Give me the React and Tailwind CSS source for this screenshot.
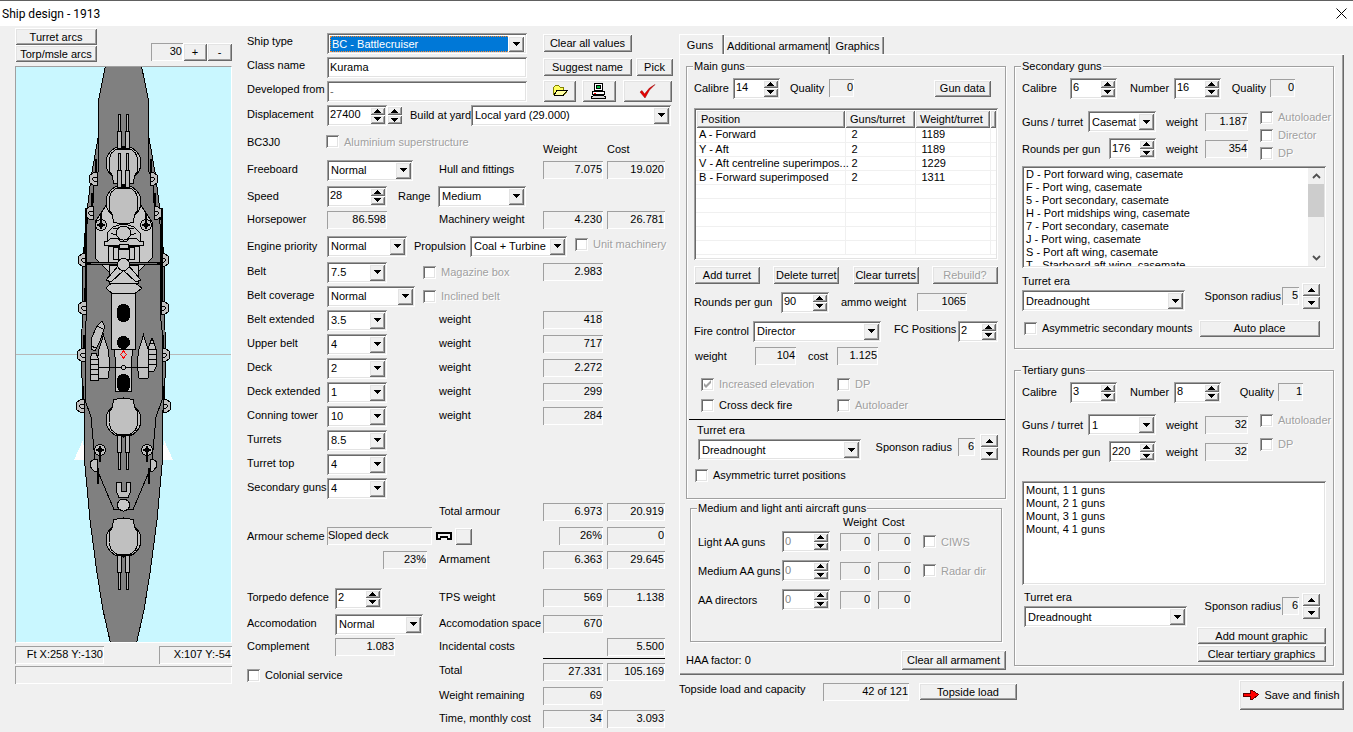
import React from "react";

const FIELD =
  "bg-white shadow-[inset_1px_1px_0_#a0a0a0,inset_-1px_-1px_0_#ffffff,inset_2px_2px_0_#696969,inset_-2px_-2px_0_#e3e3e3]";
const RAISED =
  "bg-[#f0f0f0] shadow-[inset_1px_1px_0_#ffffff,inset_-1px_-1px_0_#696969,inset_2px_2px_0_#e3e3e3,inset_-2px_-2px_0_#a0a0a0]";
const THIN = "shadow-[inset_1px_1px_0_#a0a0a0,inset_-1px_-1px_0_#ffffff]";
const DIM = "text-[#a0a0a0] [text-shadow:1px_1px_0_#ffffff]";
const GROUP =
  "min-w-0 border border-[#a0a0a0] shadow-[1px_1px_0_#ffffff,inset_1px_1px_0_#ffffff]";

function Value({ children, className = "w-[60px]", align = "text-right" }) {
  return (
    <output className={`block h-[18px] shrink-0 leading-[17px] px-px whitespace-nowrap ${THIN} ${align} ${className}`}>
      {children}
    </output>
  );
}

function Button({ children, className = "", disabled, label }) {
  return (
    <button
      type="button"
      disabled={disabled}
      aria-label={label}
      className={`flex shrink-0 items-center justify-center whitespace-nowrap ${RAISED} ${disabled ? DIM : ""} ${className}`}
    >
      {children}
    </button>
  );
}

function Tri({ up }) {
  return (
    <svg width="7" height="4" viewBox="0 0 7 4" shapeRendering="crispEdges" aria-hidden="true">
      <path d={up ? "M3 0h1v1h1v1h1v1h1v1H0V3h1V2h1V1h1z" : "M0 0h7v1H6v1H5v1H4v1H3V3H2V2H1V1H0z"} />
    </svg>
  );
}

function Select({ id, label, value, className = "", active }) {
  return (
    <span className={`grid h-[21px] shrink-0 ${active ? "p-[3px]" : "p-[2px]"} ${FIELD} ${className}`}>
      <select
        id={id}
        aria-label={label}
        defaultValue={value}
        className={`col-start-1 row-start-1 h-full w-full min-w-0 appearance-none overflow-hidden pr-4 outline-none ${
          active ? "bg-[#0078d7] pl-px text-white border border-dotted border-[#ff8728]" : "bg-transparent pl-[2px]"
        }`}
      >
        <option>{value}</option>
      </select>
      <span
        className={`pointer-events-none col-start-1 row-start-1 flex w-4 items-center justify-center justify-self-end ${RAISED}`}
      >
        <Tri />
      </span>
    </span>
  );
}

function Arrows({ label, size = "w-[15px]" }) {
  return (
    <span className={`flex h-full shrink-0 flex-col ${size}`}>
      <button type="button" aria-label={`Increase ${label}`} className={`flex min-h-0 flex-1 items-center justify-center ${RAISED}`}>
        <Tri up />
      </button>
      <button type="button" aria-label={`Decrease ${label}`} className={`flex min-h-0 flex-1 items-center justify-center ${RAISED}`}>
        <Tri />
      </button>
    </span>
  );
}

function Spin({ id, label, value, className = "w-[47px]", dim }) {
  return (
    <span className={`flex h-[21px] shrink-0 p-[2px] ${FIELD} ${className}`}>
      <input
        id={id}
        aria-label={label}
        inputMode="numeric"
        defaultValue={value}
        className={`h-[15px] w-full min-w-0 bg-transparent pl-px outline-none ${dim ? "text-[#838383]" : ""}`}
      />
      <Arrows label={label} />
    </span>
  );
}

function Check({ children, disabled, checked, className = "", gap = "gap-[5px]" }) {
  return (
    <label className={`flex items-center whitespace-nowrap ${gap} ${disabled ? DIM : ""} ${className}`}>
      <span className="grid size-[13px] shrink-0">
        <input
          type="checkbox"
          defaultChecked={checked}
          disabled={disabled}
          className={`col-start-1 row-start-1 size-[13px] appearance-none ${FIELD} ${disabled ? "bg-[#f0f0f0]" : ""}`}
        />
        {checked && (
          <svg viewBox="0 0 13 13" className="pointer-events-none col-start-1 row-start-1 size-[13px]" aria-hidden="true">
            <path d="M3 5v3l2 2 5-5V2L5 7z" fill="#a0a0a0" />
          </svg>
        )}
      </span>
      {children}
    </label>
  );
}

function Row({ label, id, h = "h-6", w = "w-20", cell = "w-28", right, weight, cost, children, top = "" }) {
  return (
    <div className={`flex items-center ${h}`}>
      {label && (
        <label htmlFor={id} className={`shrink-0 whitespace-nowrap pb-[2px] ${w}`}>
          {label}
        </label>
      )}
      <div className={`flex shrink-0 items-center ${cell}`}>{children}</div>
      <span className="w-[104px] shrink-0 whitespace-nowrap pb-[2px]">{right}</span>
      <div className={`flex h-full w-[122px] items-center gap-1 ${top}`}>
        {weight ? <Value>{weight}</Value> : <span className="w-[60px]" />}
        {cost && <Value className="w-[58px]">{cost}</Value>}
      </div>
    </div>
  );
}

function Turret({ y, flip }) {
  return (
    <g transform={`translate(123.5 ${y})${flip ? " scale(1 -1)" : ""}`} stroke="#000" strokeWidth="1">
      <ellipse cx="0" cy="0" rx="17.5" ry="17" fill="#c0c0c0" />
      <path d="M-4 -16h8v3h-8z" fill="#000" />
      <path
        d="M-7 -14H7L12 -10L14.500 -3L14 8L11 13L10 20Q0 24 -10 20L-11 13L-14 8L-14.500 -3L-12 -10Z"
        fill="#c0c0c0"
      />
      <path d="M-5 -49h2v17h-2zM3 -49h2v17h-2zM-6 -32h4v17h-4zM2 -32h4v17h-4z" fill="#b8b8b8" />
    </g>
  );
}

function Casemate({ x, y, side }) {
  const s = side === "l" ? 1 : -1;
  return (
    <g transform={`translate(${x} ${y}) scale(${s} 1)`} stroke="#000" fill="#c0c0c0">
      <path d="M4 -6.500H1L-3 -4L-4 0L-3 4L1 6.500H4Z" />
      <path d="M4 -2H1L-1 0L1 2H4" fill="none" />
      <path d="M3 -20V-6" strokeWidth="1.500" />
    </g>
  );
}

function DeckGun({ x, y, down }) {
  return (
    <g transform={`translate(${x} ${y})`} stroke="#000" fill="#c0c0c0">
      <circle r="5.500" />
      <circle r="2" fill="#707070" />
      <path d={down ? "M0 -4V12M-4 0H4" : "M0 4V-12M-4 0H4"} strokeWidth="1.500" />
    </g>
  );
}

function Ship() {
  return (
    <svg viewBox="16 67 215 575" className="block w-full" shapeRendering="crispEdges" role="img" aria-label="Ship plan">
      <rect x="16" y="67" width="215" height="575" fill="#c9f7ff" />
      <path d="M16 354.500H231" stroke="#b8b8b8" />
      <path d="M83 440L74 460H85ZM164 440L173 460H162Z" fill="#fff" />
      <path
        d="M105.500 66L99 98L98 138L91 178L86 220L83 260L82 330L81.500 370L84 410L84.500 460L90 520L97 573L103 610L110.500 643H136.500L144 610L150 573L157 520L162.500 460L163 410L165.500 370L165 330L164 260L161 220L156 178L149 138L148 98L141.500 66Z"
        fill="#808080"
        stroke="#000"
      />
      <path
        d="M98.500 98V171L93.500 182V202L88 213L86.500 230V316L85 330V400L91 417L95.500 466L114 509.500H133L151.500 466L156 417L162 400V330L160.500 316V230L159 213L153.500 202V182L148.500 171V98"
        fill="none"
        stroke="#000"
      />
      {[[93, 179], [89, 213], [82, 260], [82, 308], [81, 355], [80, 406]].map(([x, y]) => (
        <g key={y}>
          <Casemate x={x} y={y} side="l" />
          <Casemate x={247 - x} y={y} side="r" />
        </g>
      ))}
      <path d="M109 201L95 222V258L109 272H138L152 258V222L138 201Z" fill="#c8c8c8" stroke="#000" />
      <path d="M85.500 208V300M161.500 208V300" stroke="#000" strokeWidth="2" />
      <DeckGun x={101} y={225} />
      <DeckGun x={146} y={225} />
      <Turret y={163} />
      <Turret y={202} />
      <g fill="#c8c8c8" stroke="#000">
        <path d="M107 243V233L113 227Q123.500 222 134 227L140 233V243Z" />
        <path d="M111 233L118 236M136 233L129 236M113 228H134" />
        <circle cx="123.500" cy="233" r="7" />
        <path d="M104 241H108L111 238H118L120 241H127L129 238H136L139 241H143V245H104Z" />
        <path d="M108 246H139V262H108Z" />
        <path d="M113 247H118V259H113ZM129 247H134V259H129ZM119 244H128V248H119ZM118 249H129V259H118Z" />
        <path d="M109 265H138V283H109Z" />
        <path d="M106 280L119 265L124 270L111 282ZM141 280L128 265L123 270L136 282Z" />
        <path d="M86 263.500H161" strokeWidth="2.500" />
        <path d="M91 263.500H157" stroke="#c8c8c8" strokeWidth="0.600" />
        <circle cx="123.500" cy="264.500" r="6" />
        <path d="M111 283.500H136L142 288L135 293.500H112L106 288Z" />
        <path d="M111.500 293.500H135.500V349.500H111.500Z" />
        <path d="M114 349.500H133L131.500 360V391.500H115.500V360Z" />
      </g>
      <rect x="117" y="304" width="13" height="18" rx="6" />
      <circle cx="123.500" cy="342.500" r="6.500" />
      <rect x="117" y="374" width="13" height="18" rx="6" />
      <path d="M123.500 351L126.500 354.500L123.500 358L120.500 354.500Z" fill="none" stroke="#f00" />
      <g fill="#c0c0c0" stroke="#000">
        <path d="M103.500 335L99 349L97 364L98 378H108L110 364L108 349Z" />
        <path d="M143.500 335L148 349L150 364L148 378H139L137 364L139 349Z" />
        <path d="M102 321L104 325V329L100 341L95 351L91 349L91 339L97 326Z" />
        <path d="M97 326L103 329M91 346L96 348" />
        <path d="M92 353H96L98.500 359V380H90V359Z" />
        <path d="M90 359H98M90 364H98M90 369H98M90 374H98" />
        <path d="M150 343L152 338L154 343L156 349V367L154 371H149L148 367V349Z" />
        <path d="M148 349H156M148 354H156M148 359H156M148 364H156M149 343H155" />
        <path d="M98 367.500H149" />
        <circle cx="123.500" cy="367.500" r="2" />
      </g>
      <Turret y={420} flip />
      <Turret y={540} flip />
      <DeckGun x={100} y={450} down />
      <DeckGun x={147} y={450} down />
      <g fill="#c0c0c0" stroke="#000">
        <path d="M97 459H94L90.500 462V467L94 471H97ZM150 459H153L156.500 462V467L153 471H150Z" />
        <path d="M98 468V484M149 468V484" strokeWidth="1.500" />
        <path d="M116.500 482.500H121V491H126V482.500H130.500V492L128 497.500H119L116.500 492Z" />
        <circle cx="123.500" cy="505" r="6" fill="#c8c8c8" />
      </g>
    </svg>
  );
}

function LeftColumn() {
  return (
    <div className="w-[217px] shrink-0 pt-[2px]">
      <div className="flex items-end justify-between">
        <div className="flex w-[82px] flex-col">
          <Button className="h-[17px]">Turret arcs</Button>
          <Button className="h-[17px]">Torp/msle arcs</Button>
        </div>
        <div className="flex items-center pb-px">
          <Value className="w-8">30</Value>
          <Button className="h-[18px] w-6" label="Zoom in">+</Button>
          <Button className="h-[18px] w-[25px]" label="Zoom out">-</Button>
        </div>
      </div>
      <div className="mt-1 border border-t-[#a0a0a0] border-r-white border-b-white border-l-[#a0a0a0]">
        <Ship />
      </div>
      <div className="mt-[3px] flex justify-between">
        <Value className="w-[89px]">Ft X:258 Y:-130</Value>
        <Value className="w-[73px]">X:107 Y:-54</Value>
      </div>
      <Value className="mt-[2px] w-full">{""}</Value>
    </div>
  );
}

const ARMOUR = [
  ["Belt extended", "3.5", "418"],
  ["Upper belt", "4", "717"],
  ["Deck", "2", "2.272"],
  ["Deck extended", "1", "299"],
  ["Conning tower", "10", "284"],
  ["Turrets", "8.5"],
  ["Turret top", "4"],
  ["Secondary guns", "4"],
];

function MiddleColumn() {
  return (
    <div className="ml-[15px] w-[428px] shrink-0 pt-[5px]">
      <div className="flex h-6 items-center">
        <label htmlFor="type" className="w-20 pb-[4px]">Ship type</label>
        <Select id="type" value="BC - Battlecruiser" active className="w-[200px]" />
        <Button className="ml-4 h-[18px] w-[89px]">Clear all values</Button>
      </div>
      <div className="flex h-6 items-center">
        <label htmlFor="class" className="w-20 pb-[4px]">Class name</label>
        <input id="class" defaultValue="Kurama" className={`h-[21px] w-[200px] px-[3px] outline-none ${FIELD}`} />
        <Button className="ml-4 h-[18px] w-[89px]">Suggest name</Button>
        <Button className="ml-1 h-[18px] w-[37px]">Pick</Button>
      </div>
      <div className="flex h-6 items-center">
        <label htmlFor="dev" className="w-20 whitespace-nowrap pb-[4px]">Developed from</label>
        <input id="dev" defaultValue="-" className={`h-[21px] w-[200px] px-[3px] text-[#696969] outline-none ${FIELD}`} />
        <Button className="ml-4 h-[22px] w-[33px]" label="Open">
          <svg width="16" height="12" viewBox="0 0 16 12" shapeRendering="crispEdges">
            <path d="M1.500 9.500V2.500L3.500 0.500H6.500L8.500 2.500H11.500V5.500H15.500L11.500 10.500H2.500Z" fill="#ffff60" stroke="#808000" />
            <path d="M2 10L5 5.500H15L11 10.500H2" fill="#ffffa0" stroke="#000" />
          </svg>
        </Button>
        <Button className="ml-[6px] h-[22px] w-[34px]" label="Print">
          <svg width="16" height="16" viewBox="0 0 16 16" shapeRendering="crispEdges">
            <path d="M3.500 0.500H11.500V7.500H3.500Z" fill="#fff" stroke="#000" />
            <path d="M5 2H10V6H5Z" fill="#000" />
            <path d="M6 3H9V5H6Z" fill="#00c040" />
            <path d="M1.500 8.500H13.500V11.500H1.500Z" fill="#fff" stroke="#000" />
            <path d="M3 10h2v1H3z" fill="#f00" />
            <path d="M3 12.500H12L14.500 14V15.500H0.500V14Z" fill="#d8d8d8" stroke="#000" />
          </svg>
        </Button>
        <Button className="ml-[7px] h-[22px] w-[49px]" label="Check design">
          <svg width="17" height="15" viewBox="0 0 17 15">
            <path d="M1 8L3 6.500L5.500 10L10.500 4L16 0.500L10.500 6L6 14Z" fill="#e80000" stroke="#900000" strokeWidth="0.500" />
          </svg>
        </Button>
      </div>
      <div className="flex h-6 items-center">
        <label htmlFor="disp" className="w-20 pb-[2px]">Displacement</label>
        <Spin id="disp" label="displacement" value="27400" className="w-[60px]" />
        <span className="flex h-[18px]"><Arrows label="displacement by a large step" /></span>
        <label htmlFor="yard" className="ml-2 w-[61px] whitespace-nowrap">Build at yard</label>
        <Select id="yard" value="Local yard (29.000)" className="w-[200px]" />
      </div>
      <div className="flex h-[29px] items-center">
        <span className="w-[79px]">BC3J0</span>
        <Check disabled className="w-[217px]">Aluminium superstructure</Check>
        <span className="w-16 self-end">Weight</span>
        <span className="self-end">Cost</span>
      </div>
      <Row label="Freeboard" id="free" h="h-7" right="Hull and fittings" weight="7.075" cost="19.020">
        <Select id="free" value="Normal" className="w-[86px]" />
      </Row>
      <div className="flex h-6 items-center">
        <label htmlFor="speed" className="w-20">Speed</label>
        <Spin id="speed" label="speed" value="28" className="w-[60px]" />
        <label htmlFor="range" className="ml-[11px] w-10">Range</label>
        <Select id="range" value="Medium" className="w-[88px]" />
      </div>
      <Row label="Horsepower" right="Machinery weight" weight="4.230" cost="26.781">
        <Value>86.598</Value>
      </Row>
      <div className="flex h-7 items-center">
        <label htmlFor="prio" className="w-20">Engine priority</label>
        <Select id="prio" value="Normal" className="w-[80px]" />
        <label htmlFor="prop" className="ml-[7px] w-[56px]">Propulsion</label>
        <Select id="prop" value="Coal + Turbine" className="w-[97px]" />
        <Check disabled className="ml-2 pb-1">Unit machinery</Check>
      </div>
      <div className="flex h-6 items-center">
        <label htmlFor="belt" className="w-20 pb-[2px]">Belt</label>
        <Select id="belt" value="7.5" className="w-[60px]" />
        <Check disabled className="ml-9 w-[120px]">Magazine box</Check>
        <Value>2.983</Value>
      </div>
      <div className="flex h-6 items-center">
        <label htmlFor="cover" className="w-20 pb-[2px]">Belt coverage</label>
        <Select id="cover" value="Normal" className="w-[88px]" />
        <Check disabled className="ml-2">Inclined belt</Check>
      </div>
      {ARMOUR.map(([name, value, weight]) => (
        <Row key={name} label={name} id={name} right={weight && "weight"} weight={weight}>
          <Select id={name} value={value} className="w-[60px]" />
        </Row>
      ))}
      <Row cell="w-48" right="Total armour" weight="6.973" cost="20.919" />
      <div className="flex h-6 items-center">
        <span className="w-20">Armour scheme</span>
        <Value className="w-[105px]" align="text-left">Sloped deck</Value>
        <svg width="16" height="8" viewBox="0 0 16 8" className="ml-1" aria-hidden="true" shapeRendering="crispEdges">
          <path d="M1 7V1H15V7H12L11 5H5L4 7Z" fill="none" stroke="#000" strokeWidth="2" />
        </svg>
        <Button className="ml-[3px] h-[17px] w-[17px]" label="Change armour scheme" />
        <Value className="mr-1 ml-[87px] w-11">26%</Value>
        <Value className="w-[58px]">0</Value>
      </div>
      <Row label=" " right="Armament" weight="6.363" cost="29.645">
        <Value className="ml-14 w-11">23%</Value>
      </Row>
      <Row label="Torpedo defence" id="torp" h="mt-3 h-7" w="w-[88px]" cell="w-[104px]" right="TPS weight" weight="569" cost="1.138">
        <Spin id="torp" label="torpedo defence" value="2" />
      </Row>
      <Row label="Accomodation" id="acc" w="w-[88px]" cell="w-[104px]" right="Accomodation space" weight="670">
        <Select id="acc" value="Normal" className="w-[88px]" />
      </Row>
      <Row label="Complement" h="h-[22px]" w="w-[88px]" cell="w-[104px]" right="Incidental costs" cost="5.500">
        <Value>1.083</Value>
      </Row>
      <Row h="h-[26px]" cell="w-48" right="Total" weight="27.331" cost="105.169" top="border-t border-black">
        <Check className="pt-[8px]">Colonial service</Check>
      </Row>
      <Row h="h-[23px]" cell="w-48" right="Weight remaining" weight="69" />
      <Row cell="w-48" right="Time, monthly cost" weight="34" cost="3.093" />
    </div>
  );
}

const TURRETS = [
  ["A - Forward", "2", "1189"],
  ["Y - Aft", "2", "1189"],
  ["V - Aft centreline superimpos...", "2", "1229"],
  ["B - Forward superimposed", "2", "1311"],
  ["", "", ""],
  ["", "", ""],
  ["", "", ""],
  ["", "", ""],
  ["", "", ""],
];

function MainGuns() {
  return (
    <fieldset className={`h-[439px] ${GROUP}`}>
      <legend className="ml-[6px] bg-[#f0f0f0] px-px leading-[13px]">Main guns</legend>
      <div className="px-[7px]">
        <div className="flex h-[30px] items-center">
          <label htmlFor="mcal" className="w-[39px]">Calibre</label>
          <Spin id="mcal" label="main calibre" value="14" />
          <span className="ml-[10px] w-[39px]">Quality</span>
          <Value className="w-[25px]">0</Value>
          <Button className="mr-[7px] ml-auto h-[17px] w-[57px]">Gun data</Button>
        </div>
        <div className={`mt-[5px] h-[152px] overflow-hidden p-[2px] ${FIELD}`}>
          <table className="w-full table-fixed border-collapse text-left">
            <colgroup>
              <col />
              <col className="w-[70px]" />
              <col className="w-[75px]" />
              <col className="w-[6px]" />
            </colgroup>
            <thead>
              <tr className="h-[18px]">
                <th className={`p-0 pl-[5px] font-normal ${RAISED}`}>Position</th>
                <th className={`p-0 pl-[5px] font-normal ${RAISED}`}>Guns/turret</th>
                <th className={`p-0 pl-[5px] font-normal ${RAISED}`}>Weight/turret</th>
                <th className={`p-0 ${RAISED}`} />
              </tr>
            </thead>
            <tbody>
              {TURRETS.map(([pos, guns, weight], i) => (
                <tr key={i} className="h-[14px] leading-[13px]">
                  <td className="border-r border-b border-[#f0f0f0] p-0 pl-[3px] whitespace-nowrap">{pos}</td>
                  <td className="border-r border-b border-[#f0f0f0] p-0 pl-[6px]">{guns}</td>
                  <td className="border-r border-b border-[#f0f0f0] p-0 pl-[6px]">{weight}</td>
                  <td className="border-b border-[#f0f0f0] p-0" />
                </tr>
              ))}
            </tbody>
          </table>
        </div>
        <div className="mt-[6px] flex justify-between">
          <Button className="h-[18px] w-[66px]">Add turret</Button>
          <Button className="h-[18px] w-[66px]">Delete turret</Button>
          <Button className="h-[18px] w-[66px]">Clear turrets</Button>
          <Button className="h-[18px] w-[66px]" disabled>Rebuild?</Button>
        </div>
        <div className="mt-1 flex h-7 items-center">
          <label htmlFor="mrounds" className="w-[87px]">Rounds per gun</label>
          <Spin id="mrounds" label="main rounds per gun" value="90" className="w-[48px]" />
          <span className="ml-3 w-[76px]">ammo weight</span>
          <Value className="w-[50px]">1065</Value>
        </div>
        <div className="flex h-[30px] items-center">
          <label htmlFor="fc" className="w-[59px]">Fire control</label>
          <Select id="fc" value="Director" className="w-[128px]" />
          <label htmlFor="fcp" className="ml-auto w-[64px] whitespace-nowrap pb-1">FC Positions</label>
          <Spin id="fcp" label="fire control positions" value="2" className="w-10" />
        </div>
        <div className="flex h-5 items-center">
          <span className="w-[61px] pl-px">weight</span>
          <Value className="w-[41px]">104</Value>
          <span className="ml-3 w-[29px]">cost</span>
          <Value className="w-[41px]">1.125</Value>
        </div>
        <div className="mt-[7px] grid grid-cols-[136px_1fr] pl-[7px]">
          <Check disabled checked className="h-[22px]">Increased elevation</Check>
          <Check disabled className="h-[22px]">DP</Check>
          <Check className="h-5">Cross deck fire</Check>
          <Check disabled className="h-5">Autoloader</Check>
        </div>
      </div>
      <hr className="mt-[4px] ml-[2px] border-0 border-t border-black" />
      <div className="px-[7px] pt-[3px]">
        <div className="flex items-end justify-between">
          <div className="flex flex-col">
            <label htmlFor="mera" className="h-4 pl-[3px]">Turret era</label>
            <Select id="mera" value="Dreadnought" className="ml-1 w-[163px]" />
          </div>
          <div className="flex items-center">
            <span className="mr-[6px]">Sponson radius</span>
            <Value className="w-[17px]">6</Value>
            <span className="ml-[5px] flex h-[26px]"><Arrows label="main sponson radius" size="w-[18px]" /></span>
          </div>
        </div>
        <Check className="h-[30px] pl-px">Asymmetric turret positions</Check>
      </div>
    </fieldset>
  );
}

function AntiAircraft() {
  const rows = [
    ["Light AA guns", "CIWS"],
    ["Medium AA guns", "Radar dir"],
    ["AA directors", null],
  ];
  return (
    <fieldset className={`mx-1 mt-[3px] h-[140px] ${GROUP}`}>
      <legend className="ml-[6px] bg-[#f0f0f0] px-px leading-[13px]">Medium and light anti aircraft guns</legend>
      <div className="pl-[7px]">
        <div className="flex h-3 pl-[145px] leading-[14px]">
          <span className="w-[39px]">Weight</span>
          <span>Cost</span>
        </div>
        {rows.map(([name, option]) => (
          <div key={name} className="flex h-[29px] items-center">
            <label htmlFor={name} className="w-[84px] whitespace-nowrap">{name}</label>
            <Spin id={name} label={name} value="0" dim className="w-[48px]" />
            <Value className="ml-[10px] w-[31px]">0</Value>
            <Value className="ml-[7px] w-[33px]">0</Value>
            {option && <Check disabled className="ml-3">{option}</Check>}
          </div>
        ))}
      </div>
    </fieldset>
  );
}

function GunHeader({ prefix, calibre, number, quality, qualityWidth }) {
  return (
    <div className="flex h-[30px] items-center">
      <label htmlFor={`${prefix}cal`} className="w-[48px]">Calibre</label>
      <Spin id={`${prefix}cal`} label={`${prefix} calibre`} value={calibre} />
      <label htmlFor={`${prefix}num`} className="ml-[13px] w-[44px]">Number</label>
      <Spin id={`${prefix}num`} label={`${prefix} number`} value={number} />
      <span className={`ml-auto ${qualityWidth}`}>Quality</span>
      <Value className="ml-[4px] w-[25px]">{quality}</Value>
    </div>
  );
}

function GunLoad({ prefix, perTurret, rounds, first, second, options, gap }) {
  return (
    <div className="flex">
      <div className="w-[226px] shrink-0">
        <div className="flex h-[27px] items-center">
          <label htmlFor={`${prefix}gt`} className="flex-1">Guns / turret</label>
          <Select id={`${prefix}gt`} value={perTurret} className="w-[68px]" />
          <span className="ml-[10px] w-[39px]">weight</span>
          <Value className="w-[43px]">{first}</Value>
        </div>
        <div className="flex h-[27px] items-center">
          <label htmlFor={`${prefix}rd`} className="flex-1">Rounds per gun</label>
          <Spin id={`${prefix}rd`} label={`${prefix} rounds per gun`} value={rounds} />
          <span className="ml-[10px] w-[39px]">weight</span>
          <Value className="w-[43px]">{second}</Value>
        </div>
      </div>
      <div className={`ml-3 flex flex-col ${gap}`}>
        {options.map((name) => (
          <Check key={name} disabled className="h-[18px]">{name}</Check>
        ))}
      </div>
    </div>
  );
}

function Sponson({ value, label }) {
  return (
    <div className="flex items-center">
      <span>Sponson radius</span>
      <Value className="ml-px w-[17px]">{value}</Value>
      <span className="ml-[3px] flex h-[26px]"><Arrows label={label} size="w-[18px]" /></span>
    </div>
  );
}

const SECONDARY = [
  "D - Port forward wing, casemate",
  "F - Port wing, casemate",
  "5 - Port secondary, casemate",
  "H - Port midships wing, casemate",
  "7 - Port secondary, casemate",
  "J - Port wing, casemate",
  "S - Port aft wing, casemate",
  "T - Starboard aft wing, casemate",
];

function Chevron({ up }) {
  return (
    <svg width="9" height="6" viewBox="0 0 9 6" aria-hidden="true">
      <path d={up ? "M1 5L4.500 1.500L8 5" : "M1 1L4.500 4.500L8 1"} fill="none" stroke="#505050" strokeWidth="1.800" />
    </svg>
  );
}

function SecondaryGuns() {
  return (
    <fieldset className={`h-[289px] ${GROUP}`}>
      <legend className="ml-[6px] bg-[#f0f0f0] px-px leading-[13px]">Secondary guns</legend>
      <div className="pr-[7px] pl-[7px]">
        <div className="pr-[31px]">
          <GunHeader prefix="secondary" calibre="6" number="16" quality="0" />
        </div>
        <div className="mt-[5px]">
          <GunLoad prefix="secondary" perTurret="Casemat" rounds="176" first="1.187" second="354" options={["Autoloader", "Director", "DP"]} gap="gap-0" />
        </div>
        <div className={`mt-[4px] flex h-[102px] p-[2px] ${FIELD}`}>
          <ul role="listbox" aria-label="Secondary mounts" className="flex-1 overflow-hidden pl-[2px] leading-[13px]">
            {SECONDARY.map((name) => (
              <li key={name} role="option" aria-selected="false">{name}</li>
            ))}
          </ul>
          <div className="flex w-4 flex-col bg-[#f0f0f0]">
            <button type="button" aria-label="Scroll up" className="flex h-4 items-center justify-center"><Chevron up /></button>
            <span className="h-[33px] bg-[#cdcdcd]" />
            <button type="button" aria-label="Scroll down" className="mt-auto flex h-4 items-center justify-center"><Chevron /></button>
          </div>
        </div>
        <div className="mt-[6px] flex items-start justify-between pr-[6px]">
          <div className="flex flex-col">
            <label htmlFor="sera" className="h-4">Turret era</label>
            <Select id="sera" value="Dreadnought" className="w-[163px]" />
          </div>
          <div className="pt-[9px]"><Sponson value="5" label="secondary sponson radius" /></div>
        </div>
        <div className="mt-[8px] flex h-[18px] items-center justify-between pr-[6px]">
          <Check className="pl-[2px]">Asymmetric secondary mounts</Check>
          <Button className="h-[17px] w-[121px]">Auto place</Button>
        </div>
      </div>
    </fieldset>
  );
}

function TertiaryGuns() {
  return (
    <fieldset className={`mt-[15px] h-[302px] ${GROUP}`}>
      <legend className="ml-[6px] bg-[#f0f0f0] px-px leading-[13px]">Tertiary guns</legend>
      <div className="pr-[7px] pl-[7px]">
        <div className="pr-[23px]">
          <GunHeader prefix="tertiary" calibre="3" number="8" quality="1" />
        </div>
        <div className="mt-[4px]">
          <GunLoad prefix="tertiary" perTurret="1" rounds="220" first="32" second="32" options={["Autoloader", "DP"]} gap="gap-[6px]" />
        </div>
        <ul role="listbox" aria-label="Tertiary mounts" className={`mt-[16px] h-[104px] py-[3px] pl-1 leading-[13px] ${FIELD}`}>
          {[1, 2, 3, 4].map((n) => (
            <li key={n} role="option" aria-selected="false">{`Mount, ${n} 1 guns`}</li>
          ))}
        </ul>
        <div className="mt-[5px] flex items-start justify-between pr-[6px]">
          <div className="flex flex-col pl-[2px]">
            <label htmlFor="tera" className="h-4">Turret era</label>
            <Select id="tera" value="Dreadnought" className="w-[163px]" />
          </div>
          <div className="pt-[3px]"><Sponson value="6" label="tertiary sponson radius" /></div>
        </div>
        <div className="flex flex-col items-end gap-px">
          <Button className="h-[17px] w-[129px]">Add mount graphic</Button>
          <Button className="h-[17px] w-[129px]">Clear tertiary graphics</Button>
        </div>
      </div>
    </fieldset>
  );
}

const TAB =
  "border-t border-l border-white shadow-[inset_-1px_0_0_#696969,inset_-2px_0_0_#a0a0a0] whitespace-nowrap bg-[#f0f0f0]";

function RightColumn() {
  return (
    <div className="ml-[4px] min-w-[640px] flex-1 pt-2 pr-[9px]">
      <div role="tablist" className="flex h-5 items-end">
        <button type="button" role="tab" aria-selected="true" className={`h-5 w-[45px] pr-1 ${TAB}`}>Guns</button>
        <button type="button" role="tab" aria-selected="false" className={`h-[18px] w-[106px] ${TAB}`}>Additional armament</button>
        <button type="button" role="tab" aria-selected="false" className={`h-[18px] w-[54px] ${TAB}`}>Graphics</button>
      </div>
      <div className="flex h-[621px] gap-2 border-l border-white pt-[6px] pr-[10px] pl-[6px] shadow-[inset_0_1px_0_#ffffff,inset_-1px_-1px_0_#696969,inset_-2px_-2px_0_#a0a0a0]">
        <div className="min-w-0 flex-1">
          <MainGuns />
          <AntiAircraft />
          <div className="mt-[8px] flex items-center justify-between">
            <span>HAA factor: 0</span>
            <Button className="h-[20px] w-[105px]">Clear all armament</Button>
          </div>
        </div>
        <div className="min-w-0 flex-1">
          <SecondaryGuns />
          <TertiaryGuns />
        </div>
      </div>
      <div className="flex items-start pt-[5px]">
        <span className="w-[144px] whitespace-nowrap pt-[2px]">Topside load and capacity</span>
        <Value className="mt-[3px] w-[86px]">42 of 121</Value>
        <Button className="mt-[3px] ml-[10px] h-[17px] w-[98px]">Topside load</Button>
        <Button className="ml-auto h-[30px] w-[105px] gap-1">
          <svg width="17" height="10" viewBox="0 0 17 10" shapeRendering="crispEdges" aria-hidden="true">
            <path d="M0.500 3.500H7.500V0.500H9.500L15.500 4.500L9.500 9.500H7.500V6.500H0.500Z" fill="#f00" stroke="#600000" />
          </svg>
          Save and finish
        </Button>
      </div>
    </div>
  );
}

export default function App() {
  return (
    <div className="min-h-screen bg-[#f0f0f0] font-['Liberation_Sans',sans-serif] text-[11px] leading-[14px] text-black">
      <header className="flex h-[26px] items-center justify-between border-t border-[#606060] bg-white pr-1 pl-[2px] font-[Roboto,sans-serif]">
        <h1 className="text-[12px]">Ship design - 1913</h1>
        <button type="button" aria-label="Close" className="flex size-4 items-center justify-center">
          <svg width="11" height="11" viewBox="0 0 11 11">
            <path d="M0.500 0.500L10.500 10.500M10.500 0.500L0.500 10.500" stroke="#000" />
          </svg>
        </button>
      </header>
      <main className="flex pl-[15px]">
        <LeftColumn />
        <MiddleColumn />
        <RightColumn />
      </main>
    </div>
  );
}
